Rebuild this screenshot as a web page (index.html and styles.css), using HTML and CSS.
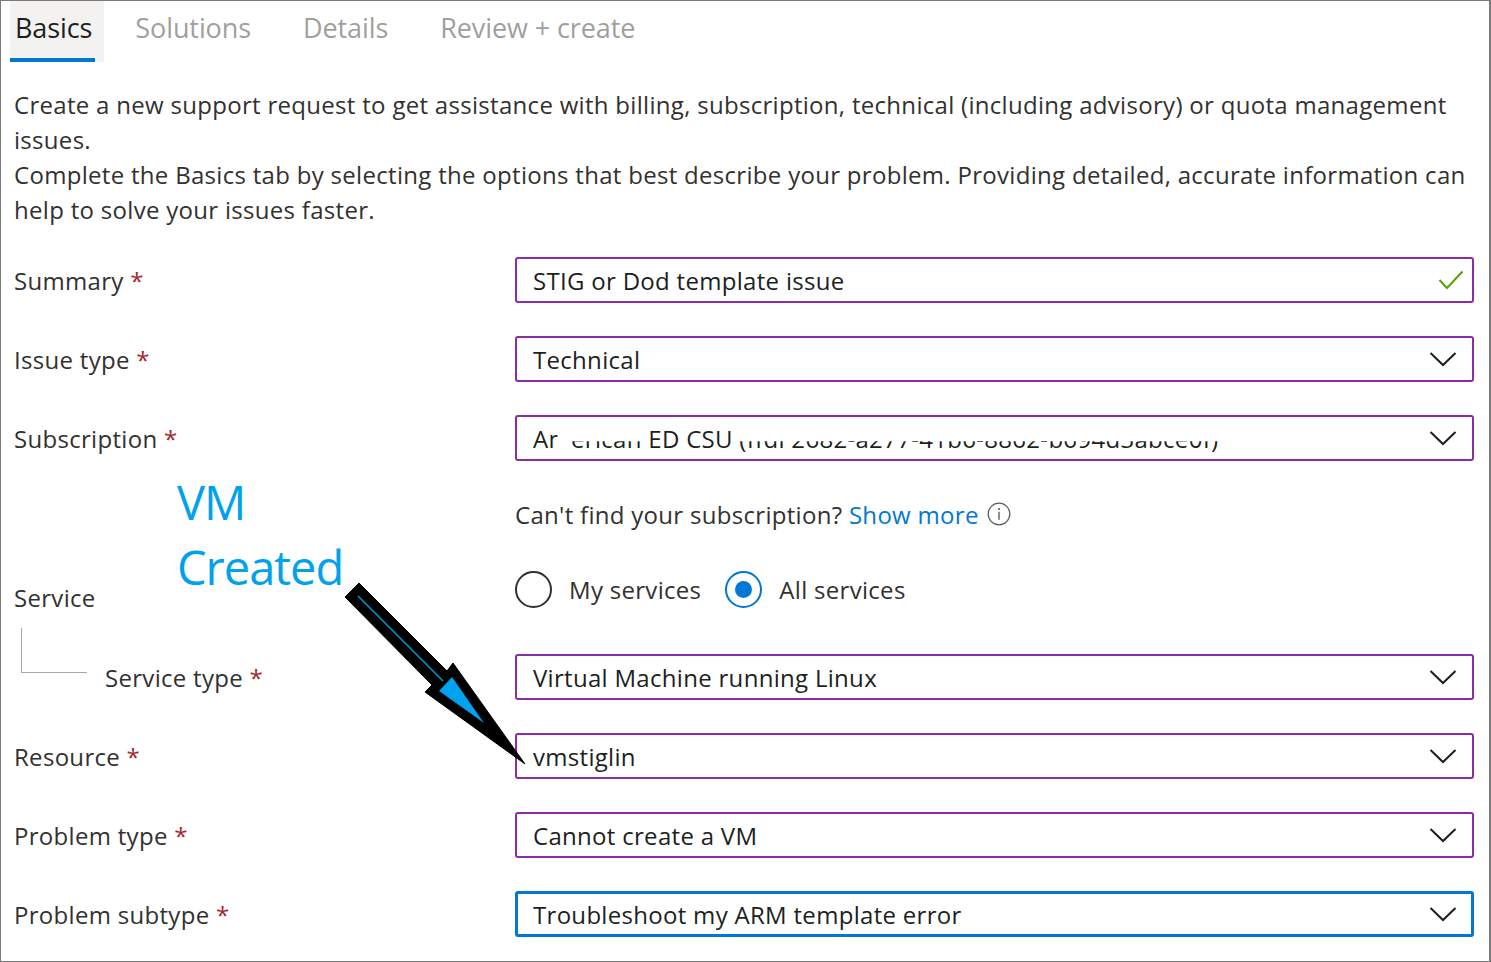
FILE: index.html
```html
<!DOCTYPE html>
<html lang="en">
<head>
<meta charset="utf-8">
<title>New support request</title>
<link rel="stylesheet" href="styles.css">
</head>
<body>
<div class="frame">
  <nav class="tabs">
    <div class="tab active">Basics</div>
    <div class="tab">Solutions</div>
    <div class="tab">Details</div>
    <div class="tab">Review + create</div>
  </nav>

  <div class="intro">
    <p>Create a new support request to get assistance with billing, subscription, technical (including advisory) or quota management<br>issues.</p>
    <p>Complete the Basics tab by selecting the options that best describe your problem. Providing detailed, accurate information can<br>help to solve your issues faster.</p>
  </div>

  <div class="form">
    <div class="row">
      <div class="label">Summary <span class="req">*</span></div>
      <div class="field">
        <span class="value">STIG or Dod template issue</span>
        <svg class="check" width="26" height="20" viewBox="0 0 26 20"><polyline points="1.5,10 9,18 24.5,1.5" fill="none" stroke="#57a300" stroke-width="2"/></svg>
      </div>
    </div>

    <div class="row">
      <div class="label">Issue type <span class="req">*</span></div>
      <div class="field">
        <span class="value">Technical</span>
        <svg class="chev" width="28" height="16" viewBox="0 0 28 16"><polyline points="1.5,2 14,14 26.5,2" fill="none" stroke="#201f1e" stroke-width="2"/></svg>
      </div>
    </div>

    <div class="row">
      <div class="label">Subscription <span class="req">*</span></div>
      <div class="field">
        <span class="value">A<span class="hide-half">m</span><span class="hide">erican</span> ED CSU <span class="hide">(ffdl 2682-a277-41b6-8862-b694d3abce0f)</span></span>
        <svg class="chev" width="28" height="16" viewBox="0 0 28 16"><polyline points="1.5,2 14,14 26.5,2" fill="none" stroke="#201f1e" stroke-width="2"/></svg>
      </div>
    </div>

    <div class="row help-row">
      <div class="label"></div>
      <div class="help">Can't find your subscription? <a class="link" href="#">Show more</a>
        <svg class="info" width="24" height="24" viewBox="0 0 24 24"><circle cx="12" cy="12" r="10.8" fill="none" stroke="#605e5c" stroke-width="1.3"/><circle cx="12" cy="7" r="1.1" fill="#605e5c"/><rect x="11.3" y="9.8" width="1.4" height="8" fill="#605e5c"/></svg>
      </div>
    </div>

    <div class="row radio-row">
      <div class="label service-label">Service</div>
      <div class="radios">
        <label class="radio"><span class="circle"></span>My services</label>
        <label class="radio checked"><span class="circle"><span class="dot"></span></span>All services</label>
      </div>
    </div>

    <div class="row">
      <div class="label sub-label"><span class="tree"></span><span class="sub-text">Service type <span class="req">*</span></span></div>
      <div class="field">
        <span class="value">Virtual Machine running Linux</span>
        <svg class="chev" width="28" height="16" viewBox="0 0 28 16"><polyline points="1.5,2 14,14 26.5,2" fill="none" stroke="#201f1e" stroke-width="2"/></svg>
      </div>
    </div>

    <div class="row">
      <div class="label">Resource <span class="req">*</span></div>
      <div class="field">
        <span class="value">vmstiglin</span>
        <svg class="chev" width="28" height="16" viewBox="0 0 28 16"><polyline points="1.5,2 14,14 26.5,2" fill="none" stroke="#201f1e" stroke-width="2"/></svg>
      </div>
    </div>

    <div class="row">
      <div class="label">Problem type <span class="req">*</span></div>
      <div class="field">
        <span class="value">Cannot create a VM</span>
        <svg class="chev" width="28" height="16" viewBox="0 0 28 16"><polyline points="1.5,2 14,14 26.5,2" fill="none" stroke="#201f1e" stroke-width="2"/></svg>
      </div>
    </div>

    <div class="row">
      <div class="label">Problem subtype <span class="req">*</span></div>
      <div class="field focused">
        <span class="value">Troubleshoot my ARM template error</span>
        <svg class="chev" width="28" height="16" viewBox="0 0 28 16"><polyline points="1.5,2 14,14 26.5,2" fill="none" stroke="#201f1e" stroke-width="2"/></svg>
      </div>
    </div>
  </div>

  <div class="note">VM<br>Created</div>
  <svg class="arrow" width="1491" height="962" viewBox="0 0 1491 962">
    <polygon points="345,597 359,583 447,671 453,663 525,764 425,692 432,685" fill="#000" stroke="#000" stroke-width="1" stroke-linejoin="miter"/>
    <line x1="358" y1="596" x2="443" y2="681" stroke="#00a2ed" stroke-width="1.2"/>
    <polygon points="439,691 452,677 484,723" fill="#00a2ed"/>
  </svg>
</div>
</body>
</html>
```

FILE: styles.css
```css
* { box-sizing: border-box; }

html, body {
  margin: 0;
  padding: 0;
  background: #ffffff;
}

body {
  font-family: "Open Sans", "Noto Sans", "Liberation Sans", sans-serif;
  color: #323130;
}

.frame {
  position: relative;
  width: 1491px;
  height: 962px;
  border: 1px solid #7a7a7a;
  border-right-width: 2px;
  overflow: hidden;
}

/* Tabs */
.tabs {
  display: flex;
  height: 61px;
  padding-left: 9px;
}

.tab {
  font-size: 27px;
  letter-spacing: -0.1px;
  color: #a19f9d;
  padding: 8px 0 0 0;
  margin-right: 52px;
  position: relative;
}

.tab.active {
  color: #201f1e;
  background: #f3f2f1;
  padding: 8px 12px 0 5px;
  margin-right: 31px;
}

.tab.active::after {
  content: "";
  position: absolute;
  left: 0;
  bottom: 0;
  width: 85px;
  height: 4px;
  background: #0078d4;
}

/* Intro */
.intro {
  padding: 25px 0 0 13px;
  font-size: 24px;
  letter-spacing: 0.3px;
  line-height: 35px;
  white-space: nowrap;
}

.intro p {
  margin: 0;
}

/* Form */
.form {
  padding: 30px 0 0 13px;
  letter-spacing: 0.3px;
}

.row {
  display: flex;
  height: 46px;
  margin-bottom: 33px;
}

.label {
  width: 501px;
  flex: none;
  display: flex;
  align-items: center;
  font-size: 24px;
  white-space: pre;
}

.req {
  color: #a4262c;
  margin-left: 0;
}

.field {
  width: 959px;
  height: 46px;
  border: 2px solid #8a2ca4;
  border-radius: 3px;
  display: flex;
  align-items: center;
  justify-content: space-between;
  padding: 0 15px 0 16px;
  font-size: 24px;
  color: #201f1e;
}

.field.focused {
  border: 3px solid #0078d4;
  padding-left: 15px;
  padding-right: 14px;
}

.value {
  white-space: nowrap;
}

.hide {
  display: inline-block;
  clip-path: inset(60% 0 0 0);
}

.hide-half {
  display: inline-block;
  clip-path: inset(0 60% 0 0);
}

.chev {
  flex: none;
}

.check {
  flex: none;
  margin-right: -7px;
}

/* Help row */
.help {
  display: flex;
  align-items: center;
  font-size: 24px;
  color: #323130;
  white-space: pre;
  margin-top: -6px;
}

.link {
  color: #0078d4;
  text-decoration: none;
}

.info {
  margin-left: 8px;
}

/* Radios */
.radio-row {
  height: 48px;
}

.service-label {
  align-items: center;
}

.radios {
  display: flex;
  align-items: center;
  margin-top: -8px;
  height: 48px;
}

.radio {
  display: flex;
  align-items: center;
  font-size: 24px;
  color: #323130;
  margin-right: 24px;
}

.circle {
  width: 37px;
  height: 37px;
  border: 2px solid #323130;
  border-radius: 50%;
  margin-right: 17px;
  display: flex;
  align-items: center;
  justify-content: center;
}

.radio.checked .circle {
  border-color: #0078d4;
}

.dot {
  width: 17px;
  height: 17px;
  border-radius: 50%;
  background: #0078d4;
}

/* Tree */
.sub-label {
  align-items: flex-start;
  padding-left: 7px;
}

.tree {
  width: 66px;
  height: 45px;
  margin-top: -26px;
  border-left: 1px solid #a6a6a6;
  border-bottom: 1px solid #a6a6a6;
  flex: none;
}

.sub-text {
  margin-left: 18px;
  align-self: center;
}

/* Annotation */
.note {
  position: absolute;
  left: 176px;
  top: 469px;
  font-size: 47px;
  letter-spacing: -1px;
  line-height: 65px;
  color: #00a2ed;
  font-family: "Open Sans", "Noto Sans", sans-serif;
}

.arrow {
  position: absolute;
  left: -1px;
  top: -1px;
  pointer-events: none;
}
```
